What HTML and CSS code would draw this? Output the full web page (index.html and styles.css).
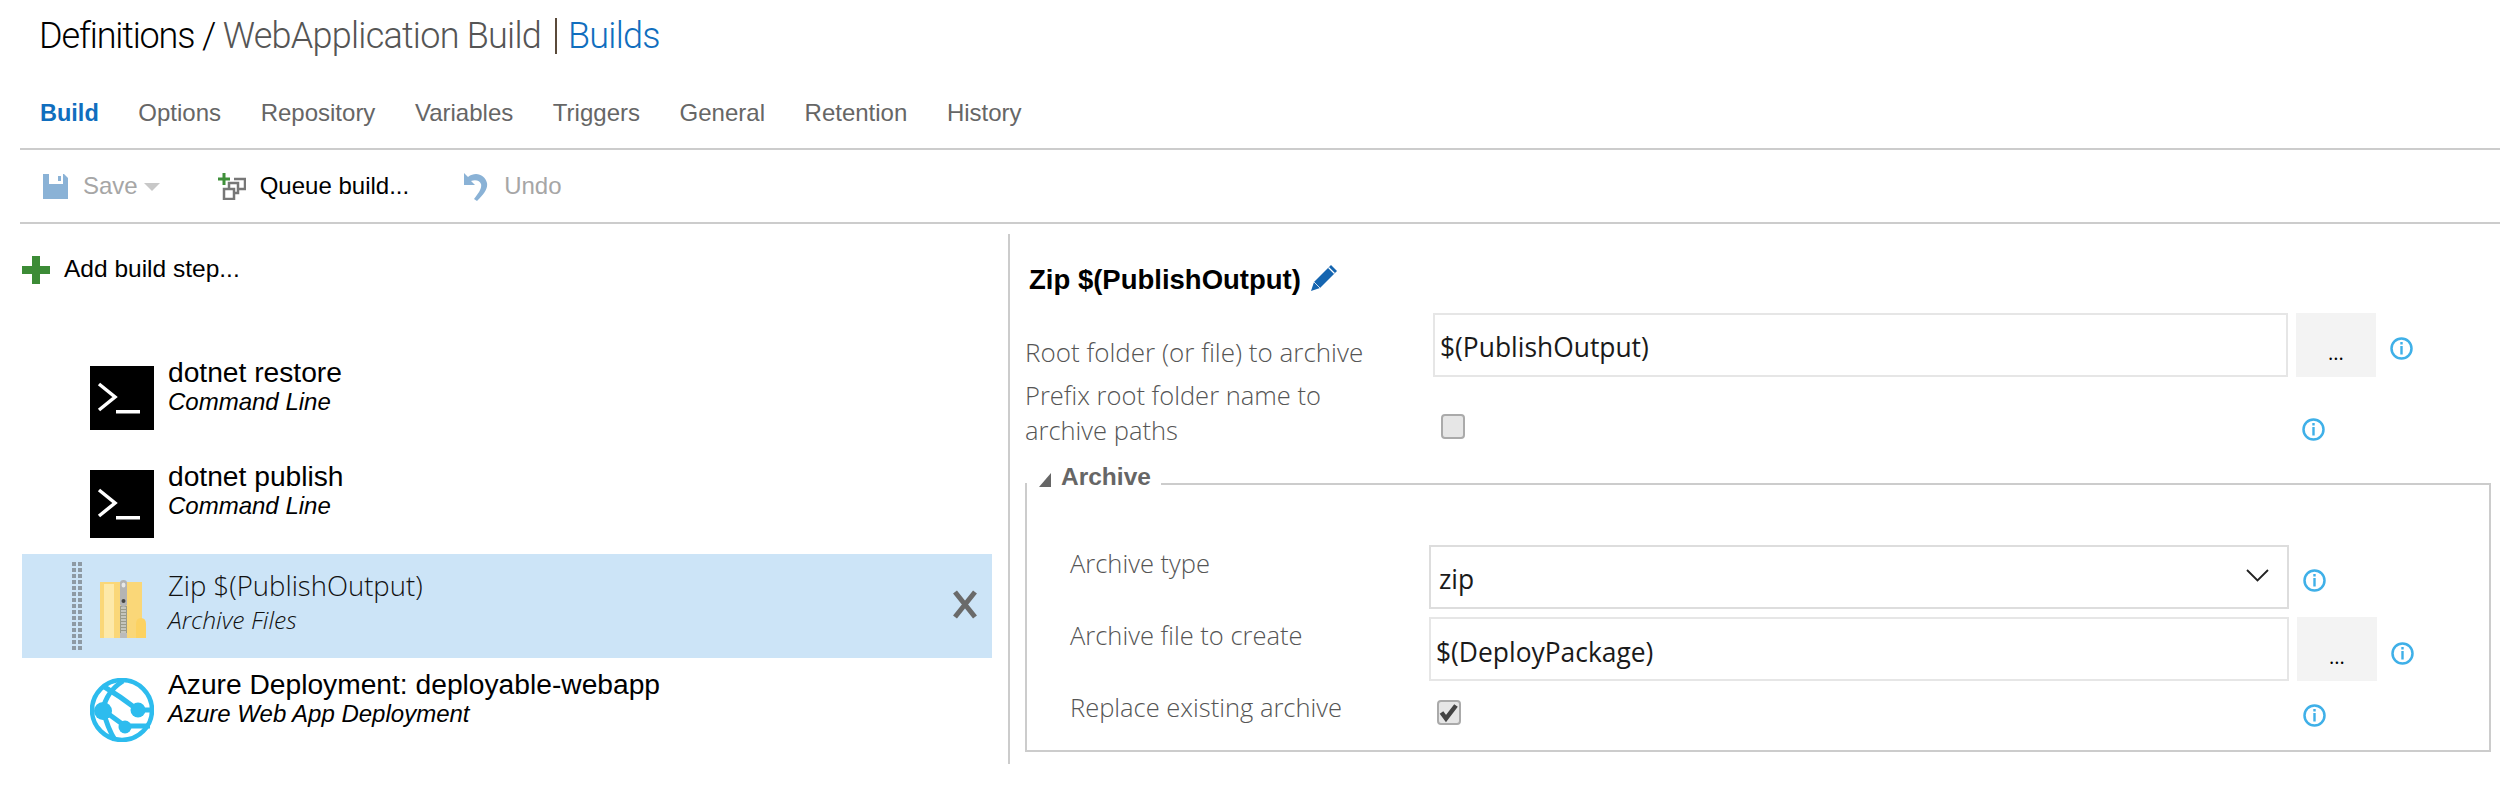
FILE: index.html
```html
<!DOCTYPE html>
<html lang="en">
<head>
    <meta charset="UTF-8">
    <meta name="viewport" content="width=device-width, initial-scale=1.0">
    <title>WebApplication Build</title>
    <link rel="stylesheet" href="styles.css">
</head>
<body>
    <div class="title">
        <span class="crumb-root">Definitions / </span><span class="crumb-name">WebApplication Build</span><span class="crumb-sep"></span><span class="crumb-link">Builds</span>
    </div>
    <div class="tabs">
        <span class="tab active">Build</span>
        <span class="tab">Options</span>
        <span class="tab">Repository</span>
        <span class="tab">Variables</span>
        <span class="tab">Triggers</span>
        <span class="tab">General</span>
        <span class="tab">Retention</span>
        <span class="tab">History</span>
    </div>
    <div class="toolbar">
        <span class="tool tool-save disabled">
            <svg width="25" height="25" viewBox="0 0 25 25"><path d="M0 0h6v10h14V0h1l4 4v21H0z" fill="#8ab2d6"/><rect x="15" y="2" width="3" height="5" fill="#8ab2d6"/></svg>
            Save
            <span class="caret"></span>
        </span>
        <span class="tool tool-queue">
            <svg width="28" height="27" viewBox="0 0 28 27"><path d="M4.500 0h3v4.500H12v3H7.500V12h-3V7.500H0v-3h4.500z" fill="#3f8f3a"/><path d="M16 6h11v10h-6M11 15v-5h9v10h-4" fill="none" stroke="#777" stroke-width="2.500"/><rect x="6" y="16" width="10" height="10" fill="none" stroke="#777" stroke-width="2.500"/></svg>
            Queue build...
        </span>
        <span class="tool tool-undo disabled">
            <svg width="27" height="29" viewBox="0 0 27 29"><path d="M2 1v12h11L9 9c5-2 9 0 10 3 1 4-2 9-7 15l3 2c7-7 11-12 10-18C23 3 14-1 6 5z" fill="#8ab2d6"/></svg>
            Undo
        </span>
    </div>
    <div class="main">
        <div class="steps">
            <div class="add-step">
                <svg width="28" height="28" viewBox="0 0 28 28"><path d="M10 0h8v10h10v8H18v10h-8V18H0v-8h10z" fill="#3c8b36"/></svg>
                Add build step...
            </div>
            <div class="step">
                <svg class="step-icon" width="64" height="64" viewBox="0 0 64 64"><rect width="64" height="64"/><path d="M9 18l16 13-16 13" fill="none" stroke="#fff" stroke-width="3.500"/><rect x="26" y="44" width="24" height="3.500" fill="#fff"/></svg>
                <div class="step-text">
                    <div class="step-name">dotnet restore</div>
                    <div class="step-type">Command Line</div>
                </div>
            </div>
            <div class="step">
                <svg class="step-icon" width="64" height="68" viewBox="0 0 64 68"><rect width="64" height="68"/><path d="M9 20l16 13-16 13" fill="none" stroke="#fff" stroke-width="3.500"/><rect x="26" y="46" width="24" height="3.500" fill="#fff"/></svg>
                <div class="step-text">
                    <div class="step-name">dotnet publish</div>
                    <div class="step-type">Command Line</div>
                </div>
            </div>
            <div class="step selected">
                <div class="grip"></div>
                <svg class="zip-icon" width="46" height="58" viewBox="0 0 46 58">
                    <rect x="0" y="2" width="42" height="56" fill="#fad778"/>
                    <rect x="4" y="4" width="10" height="54" fill="#fde9a9"/>
                    <path d="M36 58V44q0-6 5-6t5 6v14z" fill="#fcd262"/>
                    <rect x="20" y="26" width="7" height="32" fill="#9a9a8a"/>
                    <path d="M21 28h5M21 31h5M21 34h5M21 37h5M21 40h5M21 43h5M21 46h5M21 49h5M21 52h5" stroke="#eee" stroke-width="1.200"/>
                    <rect x="20" y="53" width="7" height="5" fill="#bbb"/>
                    <path d="M20 3q0-3 3.500-3t3.500 3v22q-3.500 4-7 0z" fill="#b4b4b4"/>
                    <ellipse cx="23.500" cy="5" rx="2" ry="2.500" fill="#e8e8e8"/>
                    <ellipse cx="23.500" cy="21" rx="2" ry="2" fill="#444"/>
                </svg>
                <div class="step-text">
                    <div class="step-name">Zip $(PublishOutput)</div>
                    <div class="step-type">Archive Files</div>
                </div>
                <svg class="remove" width="24" height="29" viewBox="0 0 24 29"><path d="M2 2l20 25M22 2L2 27" stroke="#6a6a6a" stroke-width="5"/></svg>
            </div>
            <div class="step">
                <svg class="step-icon" width="64" height="64" viewBox="0 0 64 64">
                    <circle cx="32" cy="32" r="30" fill="none" stroke="#2dbcee" stroke-width="4.500"/>
                    <path d="M13 32C15 20 22 10 33 3M13 32c3 12 7 22 12 30M13 32l22 16M13 8c10 6 22 14 35 24M48 32h14M35 48l25 0" fill="none" stroke="#2dbcee" stroke-width="5"/>
                    <circle cx="13" cy="33" r="9" fill="#2dbcee"/>
                    <circle cx="48" cy="32" r="7.500" fill="#2dbcee"/>
                    <circle cx="35" cy="49" r="6.500" fill="#2dbcee"/>
                </svg>
                <div class="step-text">
                    <div class="step-name">Azure Deployment: deployable-webapp</div>
                    <div class="step-type">Azure Web App Deployment</div>
                </div>
            </div>
        </div>
        <div class="details">
            <div class="details-head">
                <span>Zip $(PublishOutput)</span>
                <svg width="27" height="27" viewBox="0 0 27 27"><path d="M20 1l6 6L9 24l-9 3 3-9z" fill="#1565b0"/><path d="M17.500 3.500l6 6" stroke="#fff" stroke-width="1.200"/><path d="M3 18l6 6" stroke="#cfe0f0" stroke-width="1"/></svg>
            </div>
            <div class="row row-first">
                <label class="label">Root folder (or file) to archive</label>
                <div class="field">$(PublishOutput)</div>
                <div class="browse">...</div>
                <svg class="info" width="23" height="23" viewBox="0 0 23 23"><circle cx="11.500" cy="11.500" r="10" fill="none" stroke="#3fb0e8" stroke-width="2.500"/><rect x="10.300" y="5" width="2.400" height="2.500" fill="#3fb0e8"/><rect x="10.300" y="9" width="2.400" height="8.500" fill="#3fb0e8"/></svg>
            </div>
            <div class="row row-prefix">
                <label class="label label-wrap">Prefix root folder name to archive paths</label>
                <div class="check-cell"><span class="check"></span></div>
                <svg class="info" width="23" height="23" viewBox="0 0 23 23"><circle cx="11.500" cy="11.500" r="10" fill="none" stroke="#3fb0e8" stroke-width="2.500"/><rect x="10.300" y="5" width="2.400" height="2.500" fill="#3fb0e8"/><rect x="10.300" y="9" width="2.400" height="8.500" fill="#3fb0e8"/></svg>
            </div>
            <fieldset class="group">
                <legend class="group-title"><span class="tri"></span>Archive</legend>
                <div class="row row-type">
                    <label class="label">Archive type</label>
                    <div class="field field-select">zip
                        <svg width="23" height="13" viewBox="0 0 23 13"><path d="M1 1l10.500 10.500L22 1" fill="none" stroke="#222" stroke-width="1.800"/></svg>
                    </div>
                    <svg class="info" width="23" height="23" viewBox="0 0 23 23"><circle cx="11.500" cy="11.500" r="10" fill="none" stroke="#3fb0e8" stroke-width="2.500"/><rect x="10.300" y="5" width="2.400" height="2.500" fill="#3fb0e8"/><rect x="10.300" y="9" width="2.400" height="8.500" fill="#3fb0e8"/></svg>
                </div>
                <div class="row row-file">
                    <label class="label">Archive file to create</label>
                    <div class="field">$(DeployPackage)</div>
                    <div class="browse">...</div>
                    <svg class="info" width="23" height="23" viewBox="0 0 23 23"><circle cx="11.500" cy="11.500" r="10" fill="none" stroke="#3fb0e8" stroke-width="2.500"/><rect x="10.300" y="5" width="2.400" height="2.500" fill="#3fb0e8"/><rect x="10.300" y="9" width="2.400" height="8.500" fill="#3fb0e8"/></svg>
                </div>
                <div class="row row-replace">
                    <label class="label">Replace existing archive</label>
                    <div class="check-cell">
                        <span class="check">
                            <svg width="20" height="21" viewBox="0 0 20 21"><path d="M2.500 10.500l4.500 6 10-13" fill="none" stroke="#444" stroke-width="4.500"/></svg>
                        </span>
                    </div>
                    <svg class="info" width="23" height="23" viewBox="0 0 23 23"><circle cx="11.500" cy="11.500" r="10" fill="none" stroke="#3fb0e8" stroke-width="2.500"/><rect x="10.300" y="5" width="2.400" height="2.500" fill="#3fb0e8"/><rect x="10.300" y="9" width="2.400" height="8.500" fill="#3fb0e8"/></svg>
                </div>
            </fieldset>
        </div>
    </div>
</body>
</html>
```

FILE: styles.css
```css
body {
    font-family: 'Liberation Sans', Arial, sans-serif;
    margin: 0;
    width: 2506px;
    height: 788px;
    overflow: hidden;
    background: #fff;
    color: #000;
}
svg {
    flex: none;
    display: block;
}

/* header */
.title {
    display: flex;
    align-items: center;
    height: 72px;
    padding-left: 39px;
    font-family: Roboto, sans-serif;
    font-weight: 300;
    font-size: 36px;
    letter-spacing: -0.75px;
    white-space: pre;
}
.crumb-root {
    letter-spacing: -1.15px;
}
.crumb-name {
    color: #555;
}
.crumb-sep {
    width: 2px;
    height: 36px;
    margin: 0 11px 0 14px;
    background: #5a4a3a;
}
.crumb-link {
    color: #106ebe;
}
.tabs {
    display: flex;
    align-items: center;
    gap: 39.600px;
    height: 78px;
    margin: 0 6px 0 20px;
    padding: 6px 0 0 20px;
    box-sizing: border-box;
    border-bottom: 2px solid #ccc;
    font-size: 24px;
    color: #666;
}
.tab.active {
    color: #106ebe;
    font-size: 23.500px;
    font-weight: bold;
}
.toolbar {
    display: flex;
    align-items: center;
    height: 74px;
    margin: 0 6px 0 20px;
    padding-left: 23px;
    box-sizing: border-box;
    border-bottom: 2px solid #ccc;
    font-size: 24px;
}
.tool {
    display: flex;
    align-items: center;
    gap: 15px;
}
.tool.disabled {
    color: #a6a6a6;
}
.tool-save {
    margin-right: 58px;
}
.tool-queue {
    gap: 14px;
    margin-right: 53px;
}
.caret {
    width: 0;
    height: 0;
    margin-left: -9px;
    margin-top: 2px;
    border: 8px solid transparent;
    border-top: 8px solid #c8c8c8;
    border-bottom: 0;
}

/* left column */
.main {
    display: flex;
    height: 530px;
    padding-top: 10px;
}
.steps {
    width: 970px;
    margin-left: 22px;
    margin-right: 16px;
}
.add-step {
    display: flex;
    align-items: flex-start;
    gap: 14px;
    height: 112px;
    padding-top: 22px;
    box-sizing: border-box;
    font-size: 24.500px;
    line-height: 26px;
}
.step {
    display: flex;
    height: 104px;
    padding: 20px 0 0 68px;
    box-sizing: border-box;
}
.step-text {
    margin-left: 14px;
    margin-top: -10px;
}
.step-name {
    font-size: 28.200px;
    line-height: 32px;
}
.step-type {
    font-size: 24px;
    font-style: italic;
    line-height: 28px;
}
.step.selected {
    background: #cce4f7;
    padding: 8px 0 0 50px;
}
.selected .step-text {
    margin-left: 22px;
    margin-top: 7px;
    color: #111;
}
.selected .step-name {
    font-family: 'Open Sans', sans-serif;
    font-size: 27.500px;
    font-weight: 300;
    line-height: 33px;
}
.selected .step-type {
    font-family: 'Open Sans', sans-serif;
    font-size: 24.700px;
    font-weight: 300;
    line-height: 35px;
}
.grip {
    width: 10px;
    height: 88px;
    background-image: linear-gradient(90deg, #8e9aa4 4px, transparent 4px 6px, #8e9aa4 6px);
    mask-image: repeating-linear-gradient(#000 0 4px, transparent 4px 6px);
}
.zip-icon {
    margin: 18px 0 0 18px;
}
.remove {
    margin: 28px 15px 0 auto;
}

/* right column */
.details {
    flex: 1;
    border-left: 2px solid #ccc;
    padding: 0 15px;
    font-family: 'Open Sans', sans-serif;
}
.details-head {
    display: flex;
    gap: 10px;
    height: 79px;
    padding: 30px 0 0 4px;
    box-sizing: border-box;
    font-family: 'Liberation Sans', Arial, sans-serif;
    font-size: 27.500px;
    font-weight: bold;
}
.row {
    display: flex;
    align-items: flex-start;
}
.label {
    flex: none;
    width: 408px;
    font-size: 25.500px;
    font-weight: 300;
    color: #555;
}
.field {
    flex: none;
    display: flex;
    align-items: center;
    justify-content: space-between;
    width: 855px;
    height: 64px;
    padding: 4px 5px 0;
    box-sizing: border-box;
    border: 2px solid #e6e6e6;
    font-size: 26.400px;
    color: #1a1a1a;
}
.browse {
    flex: none;
    width: 80px;
    height: 64px;
    margin-left: 8px;
    padding-top: 26px;
    box-sizing: border-box;
    background: #f3f3f3;
    text-align: center;
    font-size: 20px;
}
.info {
    margin-left: 14px;
    margin-top: 24px;
}
.row-first {
    height: 64px;
}
.row-first .label {
    padding-top: 21px;
    font-size: 26px;
}
.row-prefix {
    height: 87px;
}
.label-wrap {
    width: 350px;
    margin: 1px 58px 0 0;
    line-height: 35px;
}
.check-cell {
    flex: none;
    width: 855px;
    padding-left: 8px;
    box-sizing: border-box;
}
.check {
    display: block;
    width: 24px;
    height: 25px;
    box-sizing: border-box;
    border: 2px solid #aaa;
    border-radius: 4px;
    background: #e6e6e6;
}
.row-prefix .check-cell {
    margin-top: 37px;
}
.row-prefix .info {
    margin-top: 41px;
}

/* archive group */
.group {
    width: 1466px;
    height: 288px;
    margin: 0;
    padding: 0 0 0 43px;
    box-sizing: border-box;
    border: 2px solid #ccc;
}
.group-title {
    display: flex;
    align-items: flex-start;
    margin-left: -43px;
    padding: 0 10px 14px 12px;
    font-family: 'Liberation Sans', Arial, sans-serif;
    font-size: 24.500px;
    font-weight: bold;
    line-height: 26px;
    color: #666;
}
.tri {
    width: 0;
    height: 0;
    margin: 9px 10px 0 0;
    border-left: 12px solid transparent;
    border-bottom: 14px solid #666;
}
.group .label {
    width: 359px;
    padding-top: 1px;
}
.group .field {
    width: 860px;
}
.row-type {
    margin-top: 41px;
    height: 64px;
}
.row-file {
    margin-top: 8px;
    height: 64px;
}
.row-file .field {
    padding-top: 5px;
}
.row-file .info {
    margin-top: 25px;
}
.field-select {
    border-color: #ddd;
    padding-left: 8px;
    padding-right: 18px;
}
.field-select svg {
    margin-top: -8px;
}
.row-replace {
    margin-top: 9px;
}
.row-replace .check-cell {
    width: 860px;
    margin-top: 10px;
}
.row-replace .label {
    padding-top: 0;
}
.row-replace .info {
    margin-top: 14px;
}
```
